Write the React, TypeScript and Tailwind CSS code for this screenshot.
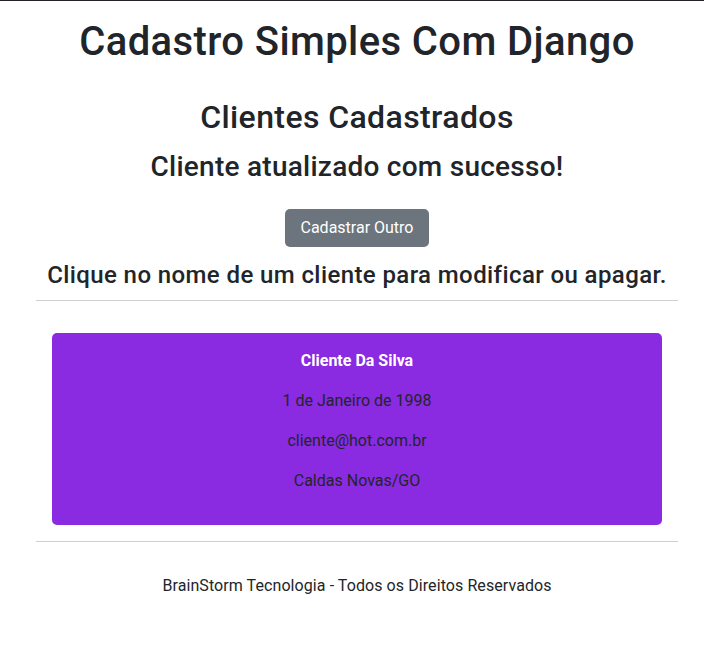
export default function App() {
  const lines = ["1 de Janeiro de 1998", "cliente@hot.com.br", "Caldas Novas/GO"];

  return (
    <div
      className="min-h-[654px] border-t border-[#212529] bg-white text-[#212529] text-center"
      style={{ fontFamily: 'Roboto, "Open Sans", sans-serif' }}
    >
      <div className="pl-[36px] pr-[26px]">
        <h1 className="pt-[17px] text-[40px] leading-[48px] font-medium tracking-[0.4px]">Cadastro Simples Com Django</h1>
        <h2 className="mt-[32px] text-[32px] leading-[38px] font-medium tracking-[0.4px]">Clientes Cadastrados</h2>
        <h3 className="mt-[14px] text-[28px] leading-[34px] font-medium tracking-[0.25px]">Cliente atualizado com sucesso!</h3>
        <div className="mt-[25px] flex justify-center">
          <button className="h-[38px] w-[144px] rounded-[5px] bg-[#6c757d] text-[16px] text-white">
            Cadastrar Outro
          </button>
        </div>
        <h4 className="mt-[14px] text-[24px] leading-[29px] font-medium tracking-[0.4px]">
          Clique no nome de um cliente para modificar ou apagar.
        </h4>
        <hr className="mt-[10px] border-t border-[#cfcfcf]" />

        <div className="px-[16px] pt-[32px]">
          <div className="rounded-[5px] bg-[#8a2be2] px-4 pt-[16px] pb-[16px]">
            <p className="mb-[16px] text-[16px] leading-[24px] font-bold text-white">Cliente Da Silva</p>
            {lines.map((l) => (
              <p key={l} className="mb-[16px] text-[16px] leading-[24px]">
                {l}
              </p>
            ))}
          </div>
        </div>

        <hr className="mt-[16px] border-t border-[#cfcfcf]" />
        <footer className="pt-[32px] text-[16px] leading-[24px] tracking-[0.08px]">
          BrainStorm Tecnologia - Todos os Direitos Reservados
        </footer>
      </div>
    </div>
  );
}
